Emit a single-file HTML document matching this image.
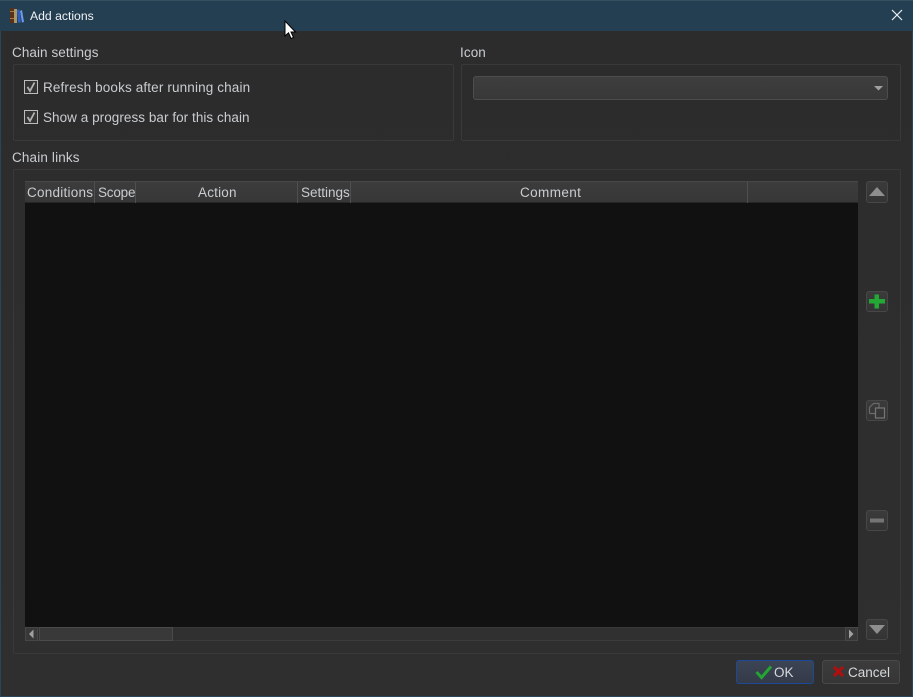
<!DOCTYPE html>
<html><head><meta charset="utf-8">
<style>
html,body{margin:0;padding:0;background:#2d2d2d;}
#w{position:relative;width:913px;height:697px;overflow:hidden;background:linear-gradient(#2c2c2c,#2f2f2f);font-family:"Liberation Sans",sans-serif;font-size:13.5px;color:#c9ccd0;}
.a{position:absolute;box-sizing:border-box;}
.t{position:absolute;white-space:nowrap;line-height:16px;}
.g{position:absolute;box-sizing:border-box;border:1px solid #393939;border-radius:2px;}
.hd{position:absolute;top:0;height:21px;width:1px;background:#4f4f4f;}
.sb{position:absolute;box-sizing:border-box;left:866px;width:22px;border:1px solid #474747;border-radius:3px;background:linear-gradient(#3b3b3b,#343434);}
.cb{position:absolute;left:24px;width:14px;height:14px;box-sizing:border-box;border:1px solid #bdbdbd;background:#343434;}
.btn{position:absolute;box-sizing:border-box;top:660px;height:24px;width:78px;border-radius:3px;}
</style></head><body>
<div id="w">
<div class="a" style="left:0;top:0;width:913px;height:31px;background:#243e52;border-top:1px solid #35505f;"></div>
<div class="a" style="left:0;top:31px;width:1px;height:666px;background:#2a4558;"></div>
<div class="a" style="left:912px;top:31px;width:1px;height:666px;background:#2a4558;"></div>
<div class="a" style="left:0;top:696px;width:913px;height:1px;background:#2a4558;"></div>

<svg class="a" style="left:9px;top:7px" width="17" height="17" viewBox="0 0 17 17">
<rect x="1" y="1" width="4" height="15" fill="#5a3018"/><rect x="1" y="4" width="4" height="1" fill="#a87a45"/><rect x="1" y="11" width="4" height="1" fill="#a87a45"/>
<rect x="5" y="2" width="3" height="14" fill="#a8986a"/>
<path d="M8 3L10.500 2.500L12 15.500L9 15.500Z" fill="#2f5fc4"/>
<path d="M11 4L13 3L15 15L13 15.500Z" fill="#6f9bea"/>
</svg>
<div class="t" style="left:30px;top:8px;color:#f0f2f4;font-size:12.2px;">Add actions</div>
<svg class="a" style="left:890px;top:8px" width="14" height="14" viewBox="0 0 14 14"><path d="M2 2L12 12M12 2L2 12" stroke="#eef1f3" stroke-width="1.2" fill="none"/></svg>

<div class="t" style="left:12px;top:45px;letter-spacing:.07px;">Chain settings</div>
<div class="t" style="left:460px;top:45px;letter-spacing:.1px;">Icon</div>
<div class="g" style="left:13px;top:64px;width:441px;height:77px;"></div>
<div class="g" style="left:461px;top:64px;width:440px;height:77px;"></div>

<div class="cb" style="top:80px;"><svg width="12" height="12" viewBox="0 0 12 12" style="display:block"><path d="M2.500 6L5 10L9.500 1.500" stroke="#b4b4b4" stroke-width="1.800" fill="none"/></svg></div>
<div class="t" style="left:43px;top:80px;letter-spacing:.14px;">Refresh books after running chain</div>
<div class="cb" style="top:110px;"><svg width="12" height="12" viewBox="0 0 12 12" style="display:block"><path d="M2.500 6L5 10L9.500 1.500" stroke="#b4b4b4" stroke-width="1.800" fill="none"/></svg></div>
<div class="t" style="left:43px;top:110px;letter-spacing:.05px;">Show a progress bar for this chain</div>

<div class="a" style="left:473px;top:76px;width:415px;height:24px;border:1px solid #4d4d4d;border-radius:3px;background:linear-gradient(#3e3e3e,#383838);"></div>
<svg class="a" style="left:874px;top:86px" width="9" height="5"><path d="M0 0H9L4.500 4.500Z" fill="#a0a0a0"/></svg>

<div class="t" style="left:12px;top:150px;letter-spacing:.15px;">Chain links</div>
<div class="g" style="left:13px;top:169px;width:888px;height:485px;"></div>

<div class="a" style="left:25px;top:181px;width:833px;height:22px;background:linear-gradient(#3c3c3c,#373737);border-top:1px solid #474747;border-bottom:1px solid #262626;">
<div class="hd" style="left:69px"></div><div class="hd" style="left:110px"></div><div class="hd" style="left:272px"></div><div class="hd" style="left:325px"></div><div class="hd" style="left:722px"></div>
<div class="t" style="left:2px;top:3px;letter-spacing:.25px;">Conditions</div>
<div class="t" style="left:73px;top:3px;letter-spacing:-.2px;">Scope</div>
<div class="t" style="left:173px;top:3px;letter-spacing:.2px;">Action</div>
<div class="t" style="left:276px;top:3px;">Settings</div>
<div class="t" style="left:495px;top:3px;letter-spacing:.4px;">Comment</div>
</div>
<div class="a" style="left:25px;top:203px;width:833px;height:424px;background:#111;"></div>

<div class="a" style="left:25px;top:627px;width:833px;height:14px;background:#303030;border-top:1px solid #383838;border-bottom:1px solid #3c3c3c;"></div>
<div class="a" style="left:25px;top:627px;width:13px;height:14px;background:#383838;border:1px solid #474747;"></div>
<svg class="a" style="left:29px;top:629px" width="6" height="10"><path d="M4.500 0.500V9.500L0 5Z" fill="#a0a0a0"/></svg>
<div class="a" style="left:39px;top:627px;width:134px;height:14px;background:#393939;border:1px solid #4a4a4a;"></div>
<div class="a" style="left:845px;top:627px;width:13px;height:14px;background:#383838;border:1px solid #474747;"></div>
<svg class="a" style="left:849px;top:629px" width="6" height="10"><path d="M0 0.500V9.500L4.500 5Z" fill="#a0a0a0"/></svg>

<div class="sb" style="top:181px;height:22px;"><svg width="20" height="20" style="display:block"><path d="M2 14L10 5L18 14Z" fill="#8e8e8e"/></svg></div>
<div class="sb" style="top:291px;height:21px;"><svg width="20" height="19" style="display:block"><path d="M7.500 2.500H12V7H18V11.500H12V16.500H7.500V11.500H2V7H7.500Z" fill="#24a835"/></svg></div>
<div class="sb" style="top:400px;height:21px;"><svg width="20" height="19" style="display:block"><path d="M2.500 12.500V6.500L6.500 2.500H12V6.500M2.500 12.500H8" stroke="#6a6a6a" stroke-width="1.200" fill="none"/><path d="M8.500 7H17.500V17H8.500Z" stroke="#767676" stroke-width="1.200" fill="none"/></svg></div>
<div class="sb" style="top:510px;height:21px;"><svg width="20" height="19" style="display:block"><rect x="3" y="7.500" width="14" height="4" fill="#747474"/></svg></div>
<div class="sb" style="top:619px;height:21px;"><svg width="20" height="19" style="display:block"><path d="M2 5H18L10 14Z" fill="#8e8e8e"/></svg></div>

<div class="btn" style="left:736px;border:1px solid #1d4a96;background:linear-gradient(#3c4454,#343a48);"></div>
<svg class="a" style="left:755px;top:664px" width="18" height="16" viewBox="0 0 18 16"><path d="M1.500 8L6.500 13.500L16 2.500" stroke="#22a533" stroke-width="3" fill="none"/></svg>
<div class="t" style="left:774px;top:665px;color:#d5d8dc;">OK</div>
<div class="btn" style="left:822px;border:1px solid #484848;background:linear-gradient(#3c3c3c,#363636);"></div>
<svg class="a" style="left:832px;top:665px" width="13" height="13" viewBox="0 0 13 13"><path d="M2 2L11 11M11 2L2 11" stroke="#b00f0f" stroke-width="3.200" fill="none"/></svg>
<div class="t" style="left:848px;top:665px;color:#d5d8dc;">Cancel</div>

<svg class="a" style="left:284px;top:20px" width="14" height="20" viewBox="0 0 14 20"><path d="M1 1V16L4.500 12.800L7 18.500L9.500 17.400L7 12H11.500Z" fill="#fff" stroke="#000" stroke-width="1"/></svg>
</div>
</body></html>
